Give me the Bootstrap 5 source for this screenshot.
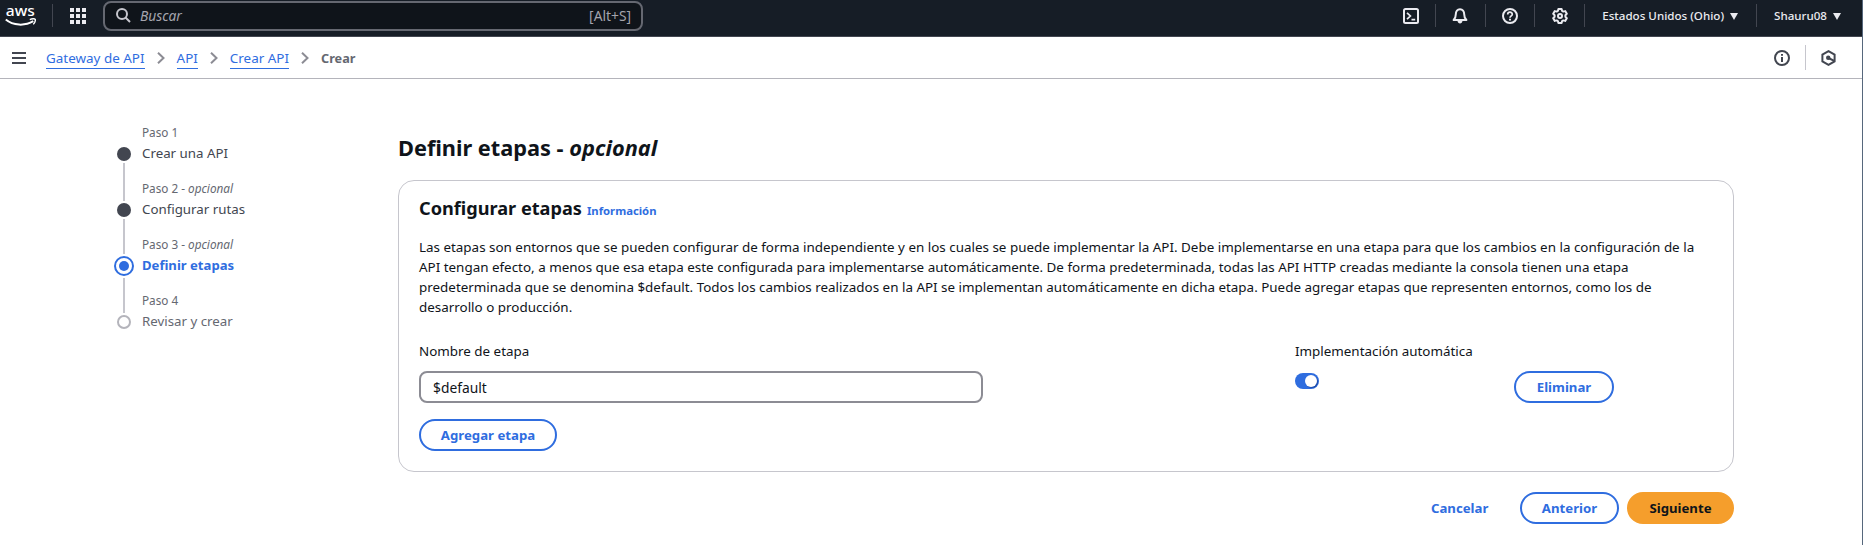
<!DOCTYPE html>
<html lang="es">
<head>
<meta charset="utf-8">
<meta name="viewport" content="width=device-width, initial-scale=1">
<title>Gateway de API</title>
<link href="https://cdn.jsdelivr.net/npm/bootstrap@5.3.0/dist/css/bootstrap.min.css" rel="stylesheet">
<style>
  :root { --blue: #2f6ddf; --ink: #0f141a; --muted-ink: #656871; --line: #c6c6cd; }
  body { font-family: "Noto Sans", "Open Sans", sans-serif; font-size: 13.42px; line-height: 20px; color: var(--ink); background: #fff; overflow: hidden; }
  svg { display: block; flex: none; }
  .page-shell { height: 545px; border-right: 1px solid #56677c; }
  .top-bar { height: 37px; background: #161d26; border-bottom: 1px solid #424650; color: #ebebf0; padding: 0 21px 9px 5px; }
  .brand { width: 31px; height: 27px; }
  .brand-text { font: 500 15px/1 "Noto Sans", sans-serif; fill: #fff; }
  .v-rule { width: 1px; height: 23px; background: #424650; margin: 0 16px; flex: none; }
  .v-rule.pale { height: 25px; background: #c6c6cd; margin: 0 15px; }
  .search-box { width: 540px; height: 30px; margin: 1px 0 0 17px; border: 2px solid #656871; border-radius: 8px; background: #0f141a; color: #a4a4ad; padding: 0 10px 0 11px; }
  .search-hint { font-size: 13.8px; }
  .search-word { margin-left: 9px; }
  .menu-label { font-size: 11.6px; font-weight: 500; color: #ebebf0; margin: 0 6px 0 1px; }
  .caret-icon { margin: 1px 2px 0 0; }
  .caret-icon:last-child { margin-right: 0; }
  .crumb-bar { height: 42px; border-bottom: 1px solid #b4b4bb; padding: 0 26px 0 12px; }
  .crumbs { margin: 0 0 0 20px; gap: 12px; }
  .crumbs a { color: var(--blue); text-decoration: none; border-bottom: 1px solid var(--blue); line-height: 20px; padding-top: 1px; font-size: 13.45px; }
  .crumbs .current { color: var(--muted-ink); font-weight: 700; font-size: 12.7px; }
  .step-nav { width: 285px; margin: 46px 0 0 113px; }
  .step { height: 56px; gap: 7px; }
  .step-no { font-size: 11.75px; line-height: 15px; color: var(--muted-ink); margin-bottom: 3px; }
  .step-name { color: #424650; font-size: 13.3px; }
  .step.active-step .step-name { color: var(--blue); font-weight: 700; font-size: 13.1px; }
  .step.todo .step-name { color: var(--muted-ink); }
  .main-pane { width: 1336px; padding-top: 54px; }
  h1 { font-size: 21.75px; line-height: 30px; font-weight: 700; margin-bottom: 17px; }
  h2 { font-size: 18.15px; line-height: 24px; font-weight: 700; margin: 0; }
  .card-head { height: 24px; gap: 5px; }
  .info-link { font-size: 11.3px; line-height: 24px; font-weight: 700; color: var(--blue); text-decoration: none; }
  .stage-card { height: 292px; border: 1px solid var(--line); border-radius: 16px; padding: 15px 20px 20px; }
  .stage-text { margin: 17px 0 24px; white-space: nowrap; }
  .stage-row { --bs-gutter-x: 20px; }
  .stage-row .form-label { margin-bottom: 10px; height: 20px; font-size: 13.4px; }
  .stage-input { width: 564px; height: 32px; border: 2px solid #8c8c94; border-radius: 8px; padding: 0 12px; font-size: 13.8px; color: var(--ink); }
  .switch { width: 24px; height: 16px; border-radius: 8px; background: var(--blue); margin-top: 12px; padding: 2px; }
  .switch i { width: 12px; height: 12px; border-radius: 50%; background: #fff; box-shadow: 1px 1px 1px #1b4aa8; }
  .pill { height: 32px; border: 2px solid var(--blue); border-radius: 20px; color: var(--blue); font-size: 13.2px; font-weight: 700; line-height: 20px; padding: 4px 0; }
  .pill-main { background: #f59e2c; border-color: #f59e2c; color: var(--ink); }
  .pill-link { border-color: transparent; margin-right: 30px; }
  .w-add { width: 138px; } .w-del { width: 100px; } .w-cancel { width: 61px; } .w-prev { width: 99px; } .w-next { width: 107px; }
</style>
</head>
<body>
<div class="page-shell">
  <header class="top-bar d-flex align-items-center">
    <svg class="brand" viewBox="0 0 31 27" fill="none">
      <text class="brand-text" x="0.8" y="15.6" textLength="29" lengthAdjust="spacingAndGlyphs">aws</text>
      <path d="M0.8 19.6C8 25.8 20 26.2 28.3 21.2" stroke="#fff" stroke-width="2"/>
      <path d="M24.8 19.6C27 18.6 29.8 18.6 30.2 19.3C30.5 20.3 29.9 22.6 28.3 24.4" stroke="#fff" stroke-width="1.4"/>
    </svg>
    <div class="v-rule mt-1"></div>
    <svg class="mt-1" width="17" height="16" viewBox="-1 0 17 16" fill="#ebebf0"><path d="M0 0h4v4H0zM6 0h4v4H6zM12 0h4v4h-4zM0 6h4v4H0zM6 6h4v4H6zM12 6h4v4h-4zM0 12h4v4H0zM6 12h4v4H6zM12 12h4v4h-4z"/></svg>
    <div class="search-box d-flex align-items-center mt-1">
      <svg width="15" height="15" fill="none" stroke="#c6c6cd" stroke-width="2"><circle cx="6" cy="6" r="5"/><path d="M9.5 9.5L14 14"/></svg>
      <em class="search-hint search-word">Buscar</em>
      <span class="search-hint ms-auto">[Alt+S]</span>
    </div>
    <div class="d-flex align-items-center ms-auto mt-1">
      <svg width="16" height="16" fill="none" stroke="#ebebf0" stroke-width="2"><rect x="1" y="1" width="14" height="14" rx="1.5"/><path d="M4 4.8L7.4 8L4 11.2M8.5 11.6H12.2" stroke-width="1.7"/></svg>
      <div class="v-rule"></div>
      <svg width="17" height="16" fill="none" stroke="#ebebf0" stroke-width="2"><path d="M1.6 12H14.4C13 10.6 12.2 9.6 12.2 6.2C12.2 3.2 10.6 1.2 8 1.2S3.8 3.2 3.8 6.2C3.8 9.6 3 10.6 1.6 12Z" stroke-linejoin="round"/><path d="M5.4 12.6C5.8 16.4 10.2 16.4 10.6 12.6Z" fill="#ebebf0" stroke="none"/></svg>
      <div class="v-rule"></div>
      <svg width="16" height="16" fill="none" stroke="#ebebf0" stroke-width="2"><circle cx="8" cy="8" r="7"/><path d="M5.7 6.4C5.7 3.5 10.3 3.5 10.3 6.3C10.3 7.9 8 7.9 8 9.8" stroke-width="1.7"/><path d="M8 10.7V12.5"/></svg>
      <div class="v-rule"></div>
      <svg width="17" height="16" viewBox="-1 0 17 16" fill="none" stroke="#ebebf0" stroke-width="2" stroke-linejoin="round"><path d="M6.4 1H9.6L10.1 2.9L11.3 3.6L13.2 3.1L14.8 5.8L13.4 7.2V8.8L14.8 10.2L13.2 12.9L11.3 12.4L10.1 13.1L9.6 15H6.4L5.9 13.1L4.7 12.4L2.8 12.9L1.2 10.2L2.6 8.8V7.2L1.2 5.8L2.8 3.1L4.7 3.6L5.9 2.9Z"/><circle cx="8" cy="8" r="2"/></svg>
      <div class="v-rule"></div>
      <span class="menu-label">Estados Unidos (Ohio)</span>
      <svg class="caret-icon" width="8" height="7" fill="#ebebf0"><path d="M0 0H8L4 7Z"/></svg>
      <div class="v-rule"></div>
      <span class="menu-label">Shauru08</span>
      <svg class="caret-icon" width="8" height="7" fill="#ebebf0"><path d="M0 0H8L4 7Z"/></svg>
    </div>
  </header>

  <div class="crumb-bar d-flex align-items-center">
    <svg width="14" height="12" stroke="#424650" stroke-width="2"><path d="M0 1H14M0 6H14M0 11H14"/></svg>
    <nav class="crumbs d-flex align-items-center">
      <a href="#">Gateway de API</a>
      <svg width="8" height="12" fill="none" stroke="#8c8c94" stroke-width="2"><path d="M1 .8L6.5 6L1 11.2"/></svg>
      <a href="#">API</a>
      <svg width="8" height="12" fill="none" stroke="#8c8c94" stroke-width="2"><path d="M1 .8L6.5 6L1 11.2"/></svg>
      <a href="#">Crear API</a>
      <svg width="8" height="12" fill="none" stroke="#8c8c94" stroke-width="2"><path d="M1 .8L6.5 6L1 11.2"/></svg>
      <span class="current">Crear</span>
    </nav>
    <div class="d-flex align-items-center ms-auto">
      <svg width="16" height="16" fill="none" stroke="#424650" stroke-width="2"><circle cx="8" cy="8" r="7"/><path d="M8 4V5.8M8 7V12"/></svg>
      <div class="v-rule pale"></div>
      <svg width="15" height="16" fill="none" stroke="#424650" stroke-width="2"><path d="M7.5 1.2L13.6 4.6V11.4L7.5 14.8L1.4 11.4V4.6Z"/><circle cx="7.2" cy="7.8" r="2.2" fill="#424650" stroke="none"/><path d="M7.5 8L13.2 10.8"/></svg>
    </div>
  </div>

  <div class="d-flex">
    <aside class="step-nav flex-shrink-0">
      <div class="step d-flex">
        <svg width="22" height="56"><circle cx="11" cy="29" r="7" fill="#424650"/><path d="M11 38V56" stroke="#c6c6cd" stroke-width="2"/></svg>
        <div><div class="step-no">Paso 1</div><div class="step-name">Crear una API</div></div>
      </div>
      <div class="step d-flex">
        <svg width="22" height="56"><path d="M11 0V20M11 38V56" stroke="#c6c6cd" stroke-width="2"/><circle cx="11" cy="29" r="7" fill="#424650"/></svg>
        <div><div class="step-no">Paso 2 - <em>opcional</em></div><div class="step-name">Configurar rutas</div></div>
      </div>
      <div class="step active-step d-flex">
        <svg width="22" height="56"><path d="M11 0V17M11 41V56" stroke="#c6c6cd" stroke-width="2"/><circle cx="11" cy="29" r="9" fill="none" stroke="#2f6ddf" stroke-width="2"/><circle cx="11" cy="29" r="5" fill="#2f6ddf"/></svg>
        <div><div class="step-no">Paso 3 - <em>opcional</em></div><div class="step-name">Definir etapas</div></div>
      </div>
      <div class="step todo d-flex">
        <svg width="22" height="56"><path d="M11 0V20" stroke="#c6c6cd" stroke-width="2"/><circle cx="11" cy="29" r="6" fill="none" stroke="#b4b4bb" stroke-width="2"/></svg>
        <div><div class="step-no">Paso 4</div><div class="step-name">Revisar y crear</div></div>
      </div>
    </aside>

    <main class="main-pane flex-shrink-0">
      <h1>Definir etapas - <em>opcional</em></h1>
      <section class="stage-card">
        <div class="card-head d-flex align-items-baseline"><h2>Configurar etapas</h2><a class="info-link" href="#">Información</a></div>
        <p class="stage-text">Las etapas son entornos que se pueden configurar de forma independiente y en los cuales se puede implementar la API. Debe implementarse en una etapa para que los cambios en la configuración de la<br>API tengan efecto, a menos que esa etapa este configurada para implementarse automáticamente. De forma predeterminada, todas las API HTTP creadas mediante la consola tienen una etapa<br>predeterminada que se denomina $default. Todos los cambios realizados en la API se implementan automáticamente en dicha etapa. Puede agregar etapas que representen entornos, como los de<br>desarrollo o producción.</p>
        <div class="row stage-row">
          <div class="col-8"><label class="form-label d-block" for="stage">Nombre de etapa</label><input class="stage-input d-block" id="stage" value="$default"></div>
          <div class="col-2"><span class="form-label d-block">Implementación automática</span><div class="switch d-flex justify-content-end"><i></i></div></div>
          <div class="col-2 d-flex align-items-end"><button class="btn pill w-del">Eliminar</button></div>
        </div>
        <button class="btn pill w-add mt-3">Agregar etapa</button>
      </section>
      <div class="d-flex justify-content-end pt-1 mt-3">
        <button class="btn pill pill-link w-cancel">Cancelar</button>
        <button class="btn pill w-prev me-2">Anterior</button>
        <button class="btn pill pill-main w-next">Siguiente</button>
      </div>
    </main>
  </div>
</div>
<script src="https://cdn.jsdelivr.net/npm/bootstrap@5.3.0/dist/js/bootstrap.bundle.min.js"></script>
</body>
</html>
